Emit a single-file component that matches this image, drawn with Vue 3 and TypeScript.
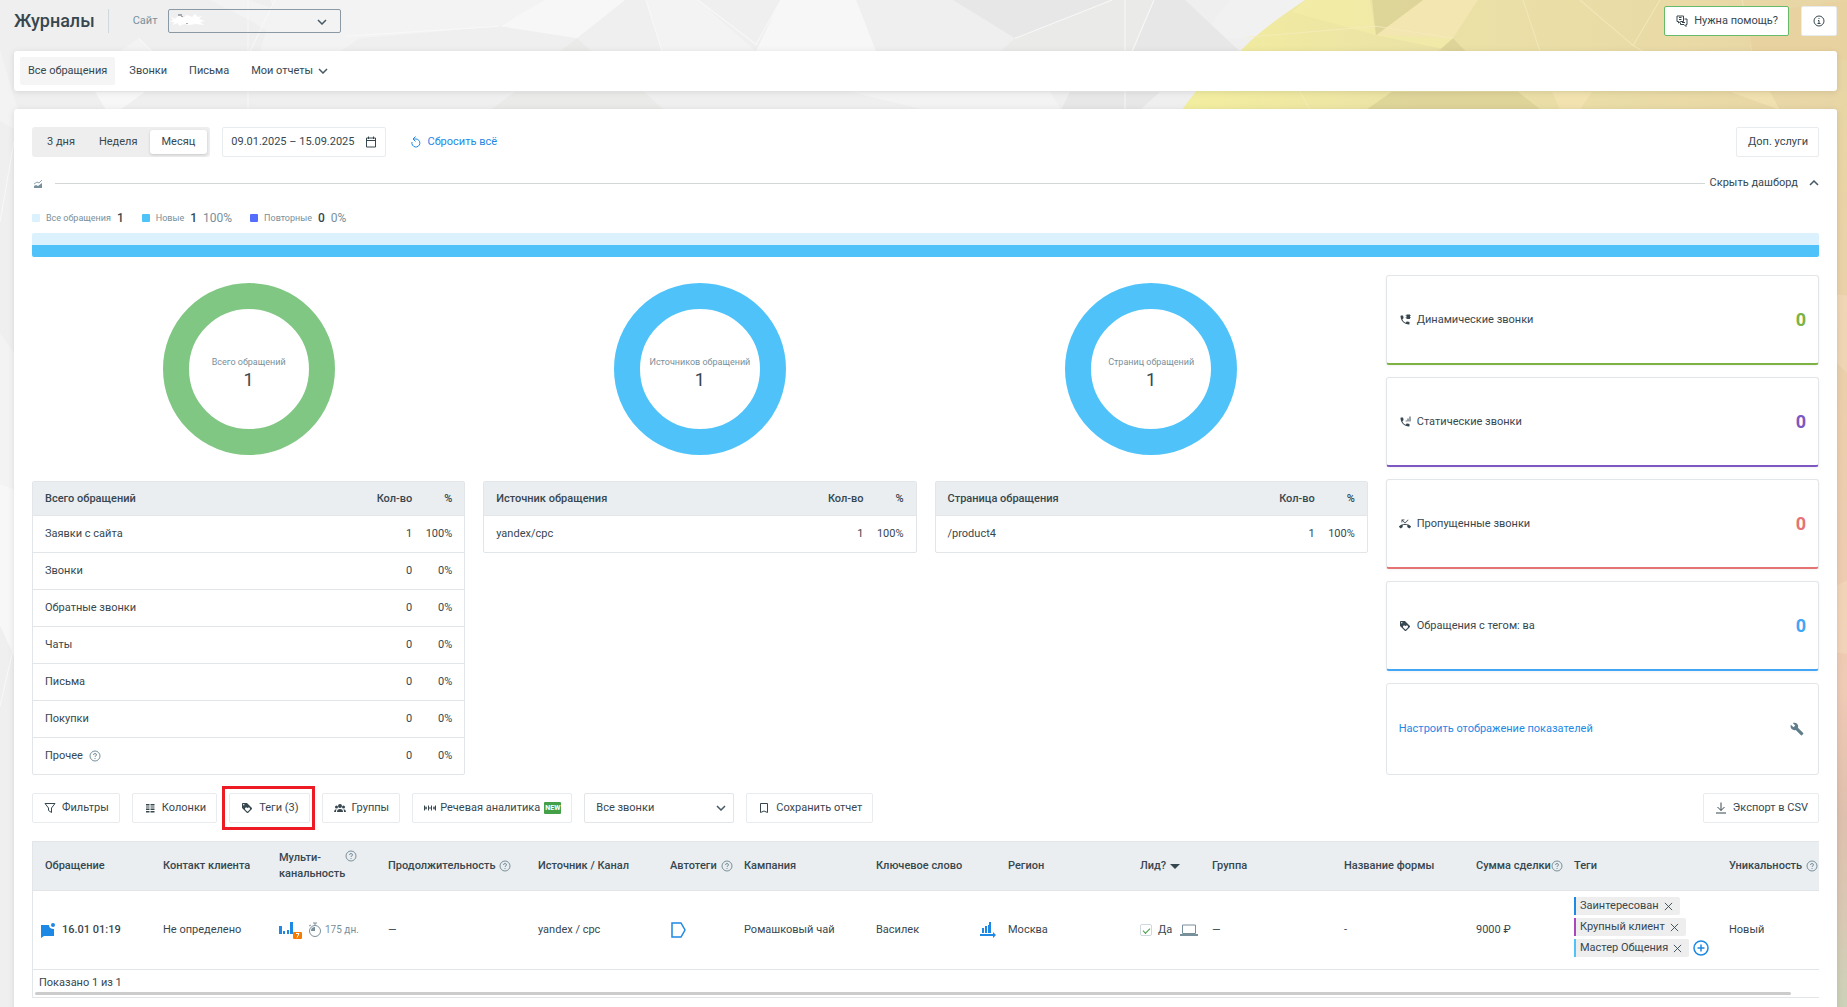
<script setup lang="ts">
import { ref } from 'vue'

interface Row { name: string; count: number; share: string; hint?: boolean }
interface Report { key: string; caption: string; title: string; total: number; color: string; rows: Row[] }
interface Metric { key: string; icon: 'dynamic' | 'static' | 'missed' | 'tag'; label: string; value: number }
interface Column { key: string; title: string; width?: number; hint?: boolean; sorted?: boolean }

const site = ref('site')
const callFilter = ref('all')
const isLead = ref(true)
const period = ref('Месяц')
const periods = ['3 дня', 'Неделя', 'Месяц']

const legend = [
  { key: 'all', name: 'Все обращения', count: 1, share: '' },
  { key: 'new', name: 'Новые', count: 1, share: '100%' },
  { key: 'repeat', name: 'Повторные', count: 0, share: '0%' },
]

const reports: Report[] = [
  {
    key: 'types', caption: 'Всего обращений', title: 'Всего обращений', total: 1, color: '#81c784',
    rows: [
      { name: 'Заявки с сайта', count: 1, share: '100%' },
      { name: 'Звонки', count: 0, share: '0%' },
      { name: 'Обратные звонки', count: 0, share: '0%' },
      { name: 'Чаты', count: 0, share: '0%' },
      { name: 'Письма', count: 0, share: '0%' },
      { name: 'Покупки', count: 0, share: '0%' },
      { name: 'Прочее', count: 0, share: '0%', hint: true },
    ],
  },
  {
    key: 'sources', caption: 'Источников обращений', title: 'Источник обращения', total: 1, color: '#4fc3f9',
    rows: [{ name: 'yandex/cpc', count: 1, share: '100%' }],
  },
  {
    key: 'pages', caption: 'Страниц обращений', title: 'Страница обращения', total: 1, color: '#4fc3f9',
    rows: [{ name: '/product4', count: 1, share: '100%' }],
  },
]

const metrics: Metric[] = [
  { key: 'green', icon: 'dynamic', label: 'Динамические звонки', value: 0 },
  { key: 'violet', icon: 'static', label: 'Статические звонки', value: 0 },
  { key: 'red', icon: 'missed', label: 'Пропущенные звонки', value: 0 },
  { key: 'blue', icon: 'tag', label: 'Обращения с тегом: ва', value: 0 },
]

const columns: Column[] = [
  { key: 'request', title: 'Обращение', width: 118 },
  { key: 'contact', title: 'Контакт клиента', width: 116 },
  { key: 'multi', title: 'Мульти-канальность', width: 109, hint: true },
  { key: 'duration', title: 'Продолжительность', width: 150, hint: true },
  { key: 'source', title: 'Источник / Канал', width: 132 },
  { key: 'auto', title: 'Автотеги', width: 74, hint: true },
  { key: 'campaign', title: 'Кампания', width: 132 },
  { key: 'keyword', title: 'Ключевое слово', width: 132 },
  { key: 'region', title: 'Регион', width: 132 },
  { key: 'lead', title: 'Лид?', width: 72, sorted: true },
  { key: 'group', title: 'Группа', width: 132 },
  { key: 'form', title: 'Название формы', width: 132 },
  { key: 'sum', title: 'Сумма сделки', width: 98, hint: true },
  { key: 'tags', title: 'Теги', width: 155 },
  { key: 'unique', title: 'Уникальность', hint: true },
]

const tags = [
  { name: 'Заинтересован', tone: 'blue' },
  { name: 'Крупный клиент', tone: 'purple' },
  { name: 'Мастер Общения', tone: 'sky' },
]

const phone = 'M6.62 10.79c1.44 2.83 3.76 5.14 6.59 6.59l2.2-2.2c.27-.27.67-.36 1.02-.24 1.12.37 2.33.57 3.57.57.55 0 1 .45 1 1V20c0 .55-.45 1-1 1-9.39 0-17-7.61-17-17 0-.55.45-1 1-1h3.5c.55 0 1 .45 1 1 0 1.25.2 2.45.57 3.57.11.35.03.74-.25 1.02l-2.2 2.2z'
const icons = {
  dynamic: phone + 'M15 1h7v9h-7zM13 3h11v1H13zM13 7h11v1H13z',
  static: phone + 'M21 1h2v10h-2zM17 5h2v6h-2zM13.500 9h2v2h-2z',
  missed: 'M6.500 5.500L12 11l7-7-1-1-6 6-4.500-4.500H11V3H5v6h1.500V5.500zm17.210 11.170C20.660 13.780 16.540 12 12 12 7.460 12 3.340 13.780.290 16.670c-.180.180-.290.430-.290.710s.110.530.290.710l2.480 2.480c.180.180.430.290.710.290.270 0 .520-.110.700-.280.790-.740 1.690-1.360 2.660-1.850.330-.160.560-.500.560-.900v-3.100C8.850 14.250 10.400 14 12 14s3.150.250 4.600.730v3.100c0 .400.230.740.560.900.980.490 1.870 1.120 2.670 1.850.180.180.430.280.700.280.280 0 .530-.110.710-.290l2.480-2.480c.180-.180.290-.430.290-.710s-.120-.520-.300-.710z',
  tag: 'M21.410 11.580l-9-9C12.050 2.220 11.550 2 11 2H4c-1.100 0-2 .900-2 2v7c0 .550.220 1.050.590 1.420l9 9c.360.360.860.580 1.410.580.550 0 1.050-.220 1.410-.590l7-7c.370-.360.590-.860.590-1.410 0-.550-.230-1.060-.590-1.420zM5.500 7C4.670 7 4 6.330 4 5.500S4.670 4 5.500 4 7 4.670 7 5.500 6.330 7 5.500 7zm11.770 8.270L13 19.540l-4.270-4.270C8.280 14.810 8 14.190 8 13.500c0-1.380 1.120-2.500 2.500-2.500.690 0 1.320.280 1.770.740l.730.720.730-.730c.450-.450 1.080-.730 1.770-.730 1.380 0 2.500 1.120 2.500 2.500 0 .690-.280 1.320-.730 1.770z',
  wrench: 'M22.700 19l-9.100-9.100c.900-2.300.400-5-1.500-6.900-2-2-5-2.400-7.400-1.300L9 6 6 9 1.600 4.700C.400 7.100.900 10.100 2.900 12.100c1.900 1.900 4.600 2.400 6.900 1.500l9.100 9.100c.400.400 1 .400 1.400 0l2.300-2.300c.500-.400.500-1.100.100-1.400z',
}
</script>

<template>
  <div class="page">
    <svg class="backdrop" viewBox="0 0 1847 1007" preserveAspectRatio="none" aria-hidden="true">
      <defs>
        <linearGradient id="warm" x1="0" y1="0" x2="1" y2="0">
          <stop offset="0" stop-color="#f2ee9f" />
          <stop offset="0.350" stop-color="#ebe2a6" />
          <stop offset="1" stop-color="#e8d5a6" />
        </linearGradient>
        <linearGradient id="edge" x1="0" y1="0" x2="0" y2="1">
          <stop offset="0" stop-color="#e8d6a4" />
          <stop offset="0.300" stop-color="#ebcfaa" />
          <stop offset="0.650" stop-color="#efcab5" />
          <stop offset="0.780" stop-color="#dfc0ae" />
          <stop offset="0.900" stop-color="#d8c9b4" />
          <stop offset="1" stop-color="#cbd3b9" />
        </linearGradient>
      </defs>
      <rect width="1847" height="1007" fill="#efefef" />
      <g fill="#f3f3f3">
        <path d="M0 50L18 109V130L0 120zM120 51L139 38L152 51zM210 0H270L290 45L250 20zM248 0L340 30L500 25L550 0z" />
        <path d="M458 0H500L499 26L360 38L340 51H260L275 0zM646 0H698L756 51H662zM780 0H856L876 51H740L756 51zM850 91H1050L1061 109H925zM0 330L14 350V600L0 520z" />
        <path d="M1230 0L1305 0L1260 38L1200 38z" fill="#f1f1f1" />
      </g>
      <g fill="#f7f7f7">
        <path d="M500 26L545 0H625L577 38zM781 0H856L876 51H756zM0 480L14 485V650L0 620zM95 91H145L120 109H106z" />
      </g>
      <path d="M953 0H1112L1015 38zM1154 0H1185L1240 51H1133zM1070 91H1160L1140 109H1061z" fill="#e7e7e7" />
      <path d="M1015 38L1112 0H1154L1133 51H1000zM490 109L515 91H644L664 109zM560 51L577 38L592 51z" fill="#eaeae8" />
      <g stroke="#f8f8f8" fill="none">
        <path d="M248 0V109M275 0L250 51M646 0L662 51M698 0L756 44L781 0M1015 38L1112 0M1125 0V109M1154 0L1132 51M345 36L499 26M139 38L152 51M0 220L14 140M0 700L14 640" />
      </g>
      <path d="M1305 0C1275 20 1255 35 1240 51C1215 68 1194 91 1182 109H1847V0z" fill="url(#warm)" />
      <path d="M1292 12L1376 35L1370 0H1423L1376 35L1455 51H1438L1453 38L1478 0H1305z" fill="#f4efa9" opacity="0.600" />
      <path d="M1423 0L1376 35L1453 38L1478 0zM1552 91L1560 109H1580L1592 91zM1730 91H1770L1780 109z" fill="#f4e4b4" opacity="0.700" />
      <path d="M1376 35L1372 0H1423zM1438 51L1453 38L1466 51zM1366 109L1392 91H1518L1541 109z" fill="#d8ce94" opacity="0.700" />
      <path d="M1523 0L1540 51M1580 0L1633 45L1643 51M1633 45L1660 0M1742 0L1752 51M1246 37L1376 26L1453 38M1300 91L1310 109" stroke="#f5edc0" fill="none" opacity="0.700" />
      <path d="M1752 51L1742 15L1847 0V60z" fill="#e8d09c" opacity="0.600" />
      <rect x="1837" y="91" width="10" height="916" fill="url(#edge)" />
      <path d="M1837 292L1847 293V370L1837 360zM1837 580L1847 575V648L1837 647z" fill="#f4d8bd" opacity="0.600" />
    </svg>

    <header class="topbar">
      <h1>Журналы</h1>
      <div class="site">
        <label for="site">Сайт</label>
        <div class="site-box">
          <select id="site" v-model="site"><option value="site"></option></select>
          <svg class="smudge" viewBox="0 0 36 14" aria-hidden="true">
            <path d="M1 4L5 6L9 2L13 5L17 2L22 4L25 1L28 4L32 3L29 6L35 8L30 9L34 12L26 11L19 12L14 11L9 13L8 10L3 12L4 9L0 9L3 7z" fill="#fff" />
            <path d="M8 2H12M12 3V4M17 10V11" stroke="#55616a" fill="none" />
          </svg>
          <svg class="chev" viewBox="0 0 10 6" aria-hidden="true"><path d="M1 1L5 5L9 1" /></svg>
        </div>
      </div>
      <div class="actions">
        <button class="btn help" type="button">
          <svg class="i12 line" viewBox="0 0 24 24"><path d="M2 2h13v11H9l-4 3v-3H2zM17 8h5v11h-2v4l-4-4H9v-4M6 5h5M6 9h5M12 15h6" /></svg>
          Нужна помощь?
        </button>
        <button class="btn info" type="button" aria-label="Информация">
          <svg class="i12 line" viewBox="0 0 24 24"><circle cx="12" cy="12" r="10" /><path d="M12 6v2M10 11h2v6M9 17h6" /></svg>
        </button>
      </div>
    </header>

    <nav class="tabs">
      <a href="#all" class="active">Все обращения</a>
      <a href="#calls">Звонки</a>
      <a href="#mail">Письма</a>
      <a href="#reports">Мои отчеты <svg class="chev" viewBox="0 0 10 6" aria-hidden="true"><path d="M1 1L5 5L9 1" /></svg></a>
    </nav>

    <main class="panel">
      <div class="filters">
        <div class="segment">
          <button v-for="p in periods" :key="p" type="button" :class="{ on: p === period }" @click="period = p">{{ p }}</button>
        </div>
        <button class="btn date" type="button">
          09.01.2025 – 15.09.2025
          <svg class="i12 line" viewBox="0 0 24 24"><path d="M3 4h18v18H3zM3 9h18M7 1v5M17 1v5" /></svg>
        </button>
        <button class="reset" type="button">
          <svg class="i12 line" viewBox="0 0 24 24"><path d="M4 12A8 8 0 1 0 12 6H6M11 1L6 6L11 11" /></svg>
          Сбросить всё
        </button>
        <button class="btn extra" type="button">Доп. услуги</button>
      </div>

      <div class="divider">
        <svg class="tiny" viewBox="0 0 8 8" aria-hidden="true"><path d="M0 8V6L2 5L4 6L8 3V8z" fill="#78909c" /><path d="M0 4L3 2L5 3L8 0" stroke="#90a4ae" fill="none" /></svg>
        <span class="rule"></span>
        <button class="fold" type="button">Скрыть дашборд <svg class="chev" viewBox="0 0 10 6" aria-hidden="true"><path d="M1 5L5 1L9 5" /></svg></button>
      </div>

      <ul class="legend">
        <li v-for="l in legend" :key="l.key">
          <i :class="l.key"></i><span>{{ l.name }}</span><b>{{ l.count }}</b><em v-if="l.share">{{ l.share }}</em>
        </li>
      </ul>
      <div class="bar"><div></div><div></div></div>

      <section class="dash">
        <div v-for="r in reports" :key="r.key" class="report">
          <div class="donut">
            <svg viewBox="0 0 172 172" aria-hidden="true"><circle cx="86" cy="86" r="73" fill="none" :stroke="r.color" stroke-width="26" /></svg>
            <p><span>{{ r.caption }}</span><strong>{{ r.total }}</strong></p>
          </div>
          <table class="mini">
            <thead><tr><th>{{ r.title }}</th><th class="num">Кол-во</th><th class="pct">%</th></tr></thead>
            <tbody>
              <tr v-for="row in r.rows" :key="row.name">
                <td>{{ row.name }}<svg v-if="row.hint" class="q" viewBox="0 0 12 12"><circle cx="6" cy="6" r="5" /><path d="M4.500 5Q4.500 3.500 6 3.500T7.500 5Q7.500 5.700 6 6.500V7M6 8V9" /></svg></td>
                <td class="num">{{ row.count }}</td>
                <td class="pct">{{ row.share }}</td>
              </tr>
            </tbody>
          </table>
        </div>
        <div class="metrics">
          <div v-for="m in metrics" :key="m.key" class="metric" :class="m.key">
            <svg class="i12 solid" viewBox="0 0 24 24"><path :d="icons[m.icon]" /></svg>
            <span>{{ m.label }}</span>
            <b>{{ m.value }}</b>
          </div>
          <div class="metric setup">
            <a href="#setup">Настроить отображение показателей</a>
            <svg class="wrench" viewBox="0 0 24 24"><path :d="icons.wrench" /></svg>
          </div>
        </div>
      </section>

      <div class="toolbar">
        <button class="btn" type="button">
          <svg class="i12 line" viewBox="0 0 24 24"><path d="M2 3H22L15 12V21L9 17V12z" /></svg>Фильтры
        </button>
        <button class="btn" type="button">
          <svg class="i12 solid" viewBox="0 0 24 24"><path d="M4 4h7v3H4zM13 4h8v3h-8zM4 9h7v2H4zM13 9h8v2h-8zM4 13h7v3H4zM13 13h8v3h-8zM4 18h7v3H4zM13 18h8v3h-8z" /></svg>Колонки
        </button>
        <button class="btn marked" type="button">
          <svg class="i12 solid" viewBox="0 0 24 24"><path :d="icons.tag" /></svg>Теги (3)
        </button>
        <button class="btn groups" type="button">
          <svg class="i12 solid" viewBox="0 0 24 24"><path d="M12 4a4 4 0 1 1 0 8a4 4 0 1 1 0-8M5 7a3 3 0 1 1 0 6a3 3 0 1 1 0-6M19 7a3 3 0 1 1 0 6a3 3 0 1 1 0-6M6 20q0-6 6-6t6 6zM0 20q0-5 5-6q-1 3-1 6zM24 20q0-5-5-6q1 3 1 6z" /></svg>Группы
        </button>
        <button class="btn speech" type="button">
          <svg class="i12 line" viewBox="0 0 24 24"><path d="M1 7v10M4 9v6M9 7v10M15 7v10M20 9v6M23 7v10M1 12h5M9 12h6M18 12h5" /></svg>Речевая аналитика<span class="new">NEW</span>
        </button>
        <div class="call-filter">
          <select v-model="callFilter" aria-label="Тип звонков"><option value="all">Все звонки</option></select>
          <svg class="chev" viewBox="0 0 10 6" aria-hidden="true"><path d="M1 1L5 5L9 1" /></svg>
        </div>
        <button class="btn save" type="button">
          <svg class="i12 line" viewBox="0 0 24 24"><path d="M5 3H19V21L12 18L5 21z" /></svg>Сохранить отчет
        </button>
        <button class="btn export" type="button">
          <svg class="i12 line" viewBox="0 0 24 24"><path d="M12 1V17M5 10L12 17L19 10M2 22H22" /></svg>Экспорт в CSV
        </button>
      </div>

      <section class="records">
        <table>
          <colgroup><col v-for="c in columns" :key="c.key" :style="c.width ? { width: c.width + 'px' } : {}" /></colgroup>
          <thead>
            <tr>
              <th v-for="c in columns" :key="c.key" :class="'h-' + c.key">
                <span>{{ c.title }}</span>
                <svg v-if="c.hint" class="q" viewBox="0 0 12 12"><circle cx="6" cy="6" r="5" /><path d="M4.500 5Q4.500 3.500 6 3.500T7.500 5Q7.500 5.700 6 6.500V7M6 8V9" /></svg>
                <svg v-if="c.sorted" class="sort" viewBox="0 0 10 6"><path d="M0 1H10L5 6z" /></svg>
              </th>
            </tr>
          </thead>
          <tbody>
            <tr>
              <td class="request">
                <svg class="i16" viewBox="0 0 16 16"><path d="M1 3H9Q9 7 14 7V14H4L1 16z" fill="#1e88e5" /><circle cx="13" cy="3" r="2" fill="#1e88e5" /></svg>
                <b>16.01 01:19</b>
              </td>
              <td>Не определено</td>
              <td>
                <div class="inline">
                  <svg class="multi" viewBox="0 0 24 18"><path d="M0 5H3V13H0zM4 10H6V13H4zM8 9H10V13H8zM11 1H14V13H11z" fill="#1e88e5" /><rect x="14" y="11" width="9" height="7" rx="1" fill="#f57c00" /><path d="M17 12.500H20L18 16.500" stroke="#fff" fill="none" /></svg>
                  <svg class="watch" viewBox="0 0 14 16"><circle cx="7" cy="9" r="5.500" fill="none" stroke="#78909c" /><path d="M7 9V5A4 4 0 0 0 3 9z" fill="#78909c" /><path d="M5 1H9M7 1V3M1 4L3 3" stroke="#78909c" fill="none" /></svg>
                  <small>175 дн.</small>
                </div>
              </td>
              <td>—</td>
              <td>yandex / cpc</td>
              <td><svg class="i16" viewBox="0 0 16 16"><path d="M2 1H11L15 8L11 15H2z" fill="none" stroke="#1e88e5" stroke-width="1.500" /></svg></td>
              <td>Ромашковый чай</td>
              <td>
                <div class="inline spread">
                  Василек
                  <svg class="i16" viewBox="0 0 16 16"><path d="M2 6H4V11H2zM5 4H7V11H5zM8 3H9V11H8zM9 0H11V11H9zM0 12H13V10L16 13L13 16V14H0z" fill="#1e88e5" /></svg>
                </div>
              </td>
              <td>Москва</td>
              <td>
                <div class="inline lead">
                  <label><input v-model="isLead" type="checkbox" />Да</label>
                  <svg class="laptop" viewBox="0 0 18 12"><path d="M2.500 1H15.500V9.500H2.500z" fill="none" stroke="#78909c" /><path d="M0 10H18V12H0z" fill="#78909c" /></svg>
                </div>
              </td>
              <td>—</td>
              <td>-</td>
              <td>9000 ₽</td>
              <td class="tag-cell">
                <ul class="tags">
                  <li v-for="t in tags" :key="t.name">
                    <span class="tag" :class="t.tone">{{ t.name }}
                      <button type="button" :aria-label="'Убрать тег ' + t.name"><svg viewBox="0 0 10 10"><path d="M1 1L9 9M9 1L1 9" /></svg></button>
                    </span>
                    <button v-if="t.tone === 'sky'" class="add" type="button" aria-label="Добавить тег"><svg viewBox="0 0 16 16"><circle cx="8" cy="8" r="7" /><path d="M8 4.500V11.500M4.500 8H11.500" /></svg></button>
                  </li>
                </ul>
              </td>
              <td>Новый</td>
            </tr>
          </tbody>
        </table>
        <p class="shown">Показано 1 из 1</p>
        <div class="scroll"><div></div></div>
      </section>
    </main>
  </div>
</template>

<style>
html { overflow: hidden; }
body { margin: 0; background: #efefef; }
</style>

<style scoped>
* { box-sizing: border-box; }
.page {
  position: relative;
  min-height: 100vh;
  padding: 0 10px 0 14px;
  overflow: hidden;
  font: 11px/16px Roboto, "Liberation Sans", sans-serif;
  color: #37474f;
}
.backdrop { position: absolute; inset: 0; width: 100%; height: 100%; }
button, select, input { font: inherit; color: inherit; margin: 0; }
button { border: 0; background: none; padding: 0; cursor: pointer; white-space: nowrap; }
a { color: inherit; text-decoration: none; }
ul, p, h1 { margin: 0; padding: 0; list-style: none; }
svg { flex: none; }
.i12 { width: 12px; height: 12px; }
.i16 { width: 16px; height: 16px; }
.line { fill: none; stroke: currentColor; stroke-width: 2; }
.solid { fill: currentColor; }
.chev { width: 10px; height: 6px; fill: none; stroke: #455a64; stroke-width: 1.500; }
.btn {
  display: flex;
  align-items: center;
  gap: 6px;
  height: 30px;
  padding: 0 10px 0 11px;
  border: 1px solid #e8ecee;
  border-radius: 2px;
  background: #fff;
}

.topbar { position: relative; display: flex; align-items: center; height: 51px; padding-bottom: 9px; }
h1 { padding-right: 13px; font-size: 18px; line-height: 24px; font-weight: 500; border-right: 1px solid #cfd8dc; }
.site { display: flex; align-items: center; gap: 11px; margin-left: 24px; color: #78909c; }
.site-box { position: relative; width: 173px; }
.site-box select { display: block; width: 100%; height: 24px; padding: 0 8px; appearance: none; background: transparent; border: 1px solid #8a99a3; border-radius: 2px; }
.smudge { position: absolute; left: 2px; top: 4px; width: 36px; height: 14px; }
.site-box .chev { position: absolute; right: 14px; top: 10px; }
.actions { display: flex; gap: 12px; margin-left: auto; }
.help { border-color: #66bb6a; }
.info { width: 36px; justify-content: center; padding: 0; }

.tabs {
  position: relative;
  display: flex;
  align-items: center;
  gap: 6px;
  height: 40px;
  padding: 0 6px;
  background: #fff;
  border-radius: 3px;
  box-shadow: 0 1px 6px rgba(0, 0, 0, 0.1);
}
.tabs a { display: flex; align-items: center; gap: 5px; height: 28px; padding: 0 8px; border-radius: 2px; }
.tabs .active { background: #f5f5f5; }

.panel { position: relative; margin-top: 18px; padding: 18px; background: #fff; border-radius: 3px; box-shadow: 0 1px 6px rgba(0, 0, 0, 0.1); }
.filters { display: flex; }
.segment { display: flex; padding: 3px; background: #eee; border-radius: 3px; }
.segment button { height: 24px; padding: 0 12px; border-radius: 3px; }
.segment .on { background: #fff; box-shadow: 0 1px 3px rgba(0, 0, 0, 0.16); }
.date { margin-left: 12px; padding: 0 8px; gap: 11px; }
.reset { display: flex; align-items: center; gap: 5px; margin-left: 24px; color: #1e88e5; }
.extra { margin-left: auto; }

.divider { display: flex; align-items: center; height: 20px; margin-top: 16px; }
.tiny { width: 8px; height: 8px; margin: 2px 13px 0 2px; }
.rule { flex: 1; height: 1px; background: #d3d8d6; }
.fold { display: flex; align-items: center; gap: 11px; margin-left: 5px; }

.legend { display: flex; gap: 18px; height: 16px; margin-top: 17px; color: #78909c; }
.legend li { display: flex; align-items: center; gap: 6px; font-size: 12px; }
.legend i { width: 8px; height: 8px; border-radius: 1px; }
.legend .all { background: #dbf2fe; }
.legend .new { background: #4fc3f7; }
.legend .repeat { background: #536dfe; }
.legend span { font-size: 9px; }
.legend b { font-weight: 500; color: #37474f; }
.legend em { font-style: normal; }
.bar { margin-top: 7px; border-radius: 2px; overflow: hidden; }
.bar div { height: 12px; background: #dbf2fe; }
.bar div + div { background: #4fc3f9; }

.dash { display: grid; grid-template-columns: repeat(4, minmax(0, 1fr)); gap: 18px; margin-top: 18px; }
.donut { display: grid; place-items: center; padding: 8px 0 26px; }
.donut > * { grid-area: 1 / 1; }
.donut svg { width: 172px; height: 172px; }
.donut p { padding-top: 6px; text-align: center; }
.donut span { display: block; font-size: 9px; color: #78909c; }
.donut strong { display: block; font-size: 18px; line-height: 20px; font-weight: 400; }
table { width: 100%; border-collapse: separate; border-spacing: 0; }
th { font-weight: 500; text-align: left; }
.mini { table-layout: fixed; border: 1px solid #e2e6e9; border-radius: 2px; overflow: hidden; }
.mini th, .mini td { height: 37px; padding: 0 12px; border-top: 1px solid #e2e6e9; }
.mini th { height: 33px; background: #eaeef1; border-top: 0; }
.mini .num, .mini .pct { padding-left: 0; text-align: right; }
.mini .num { width: 60px; padding-right: 0; }
.mini .pct { width: 52px; }
.q { width: 12px; height: 12px; fill: none; stroke: #78909c; vertical-align: middle; }
td .q { margin-left: 6px; }
.metrics { display: grid; grid-template-rows: repeat(4, 90px) 92px; gap: 12px; }
.metric { display: flex; align-items: center; gap: 6px; padding: 0 12px; border: 1px solid #e2e6e9; border-bottom-width: 2px; border-radius: 3px; box-shadow: 0 1px 3px rgba(0, 0, 0, 0.05); }
.metric b { margin-left: auto; font-size: 18px; font-weight: 700; }
.green { border-bottom-color: #7cb342; } .green b { color: #7cb342; }
.violet { border-bottom-color: #7e57c2; } .violet b { color: #7e57c2; }
.red { border-bottom-color: #e57373; } .red b { color: #e57373; }
.blue { border-bottom-color: #42a5f5; } .blue b { color: #42a5f5; }
.setup { padding-right: 14px; border-bottom-width: 1px; box-shadow: none; }
.setup a { color: #1e88e5; }
.wrench { width: 14px; height: 14px; margin-left: auto; fill: #607d8b; }

.toolbar { display: flex; gap: 12px; margin-top: 18px; }
.marked { position: relative; }
.marked::after { content: ""; position: absolute; inset: -8px -6px -8px -8px; border: 3px solid #ed1c24; }
.speech { gap: 4px; }
.new { padding: 0 1px; border-radius: 1px; background: #43a047; color: #fff; font-size: 7px; line-height: 12px; font-weight: 700; }
.call-filter { position: relative; width: 150px; }
.call-filter select { width: 100%; height: 30px; padding: 0 11px; appearance: none; border: 1px solid #e2e6e9; border-radius: 2px; background: #fff; }
.call-filter .chev { position: absolute; right: 8px; top: 12px; }
.export { margin-left: auto; }

.records { margin-top: 18px; border: 1px solid #e2e6e9; border-right: 0; overflow: hidden; }
.records table { table-layout: fixed; min-width: 1786px; }
.records th, .records td { padding: 0 0 0 12px; white-space: nowrap; border-bottom: 1px solid #e2e6e9; }
.records th { height: 49px; background: #eaeef1; }
.records td { height: 79px; }
.records th span { vertical-align: middle; margin-right: 4px; }
.records .h-multi span { display: inline-block; width: 62px; white-space: normal; }
.records .h-multi .q { vertical-align: top; }
.records .h-sum span { margin-right: 0; }
.sort { width: 10px; height: 6px; fill: #37474f; vertical-align: middle; }
.records .request { padding-left: 7px; }
.request b { margin-left: 6px; font-weight: 500; }
.records td > svg, .request b { vertical-align: middle; }
.inline { display: flex; align-items: center; }
.spread { justify-content: space-between; }
.multi { width: 24px; height: 18px; }
.watch { width: 14px; height: 16px; margin: 0 3px 0 5px; }
small { font-size: 10px; color: #78909c; }
.lead { gap: 8px; }
.lead label { display: flex; align-items: center; gap: 6px; }
.lead input {
  appearance: none;
  width: 12px;
  height: 12px;
  border: 1px solid #cfd8dc;
  border-radius: 2px;
  display: grid;
  place-items: center;
}
.lead input:checked::after { content: ""; width: 6px; height: 3px; border: solid #43a047; border-width: 0 0 1px 1px; transform: rotate(-45deg); }
.laptop { width: 18px; height: 12px; }
.records .tag-cell { padding-top: 6px; vertical-align: top; }
.tags { display: grid; gap: 3px; }
.tags li { display: flex; align-items: center; gap: 4px; height: 18px; }
.tag { display: flex; align-items: center; gap: 5px; height: 18px; padding: 0 7px 0 4px; border-left: 2px solid; border-radius: 0 2px 2px 0; background: #eee; }
.tag.blue { border-color: #1e88e5; }
.tag.purple { border-color: #ab47bc; }
.tag.sky { border-color: #4fc3f7; }
.tags button { display: flex; }
.tag svg { width: 9px; height: 9px; fill: none; stroke: #37474f; }
.add svg { width: 16px; height: 16px; fill: none; stroke: #1e88e5; stroke-width: 1.500; }
.shown { padding: 5px 6px 1px; }
.scroll { padding: 0 10px 2px 2px; }
.scroll div { width: 99%; height: 3px; border-radius: 2px; background: #ccc; }
</style>
